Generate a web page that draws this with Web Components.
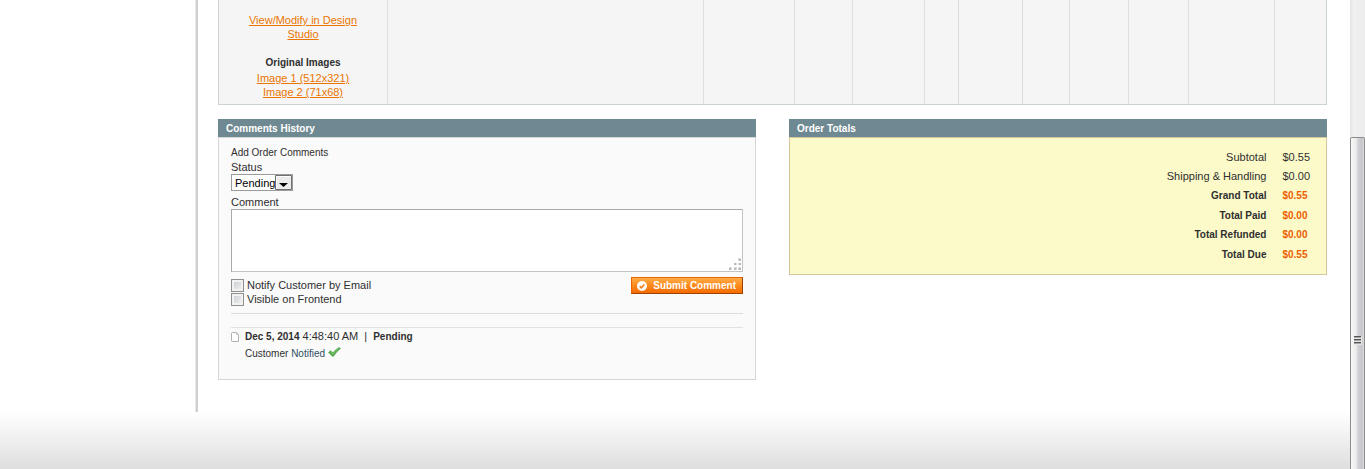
<!DOCTYPE html>
<html lang="en">
<head>
    <meta charset="UTF-8">
    <meta name="viewport" content="width=device-width, initial-scale=1.0">
    <title>Order</title>
    <style>
    body {
        margin: 0;
        overflow: hidden;
        background: #fff;
        color: #2f2f2f;
        font: 11px/14px "Liberation Sans", Arial, sans-serif;
    }
    </style>
</head>
<body>
    <admin-page>
        <order-items></order-items>
        <box-panel heading="Comments History" slot="left">
            <order-comments></order-comments>
        </box-panel>
        <box-panel heading="Order Totals" class="totals" slot="right">
            <order-totals></order-totals>
        </box-panel>
    </admin-page>
    <script>
        function define(name, html, setup) {
            customElements.define(name, class extends HTMLElement {
                constructor() {
                    super();
                    this.attachShadow({ mode: 'open' }).innerHTML = html;
                }
                connectedCallback() {
                    if (setup) setup(this, this.shadowRoot);
                }
            });
        }

        define('scroll-track', `
            <style>
            :host {
                display: flex;
                flex-direction: column;
                flex: 0 0 15px;
                box-sizing: border-box;
                padding-top: 137px;
                background: linear-gradient(90deg, #e6e6e6, #f0f0f0 4px, #ededed);
            }
            .thumb {
                flex: 1;
                border: 1px solid #8c8c8c;
                border-bottom: 0;
                border-radius: 2px 2px 0 0;
                padding: 198px 0 0 3px;
                background: linear-gradient(90deg, #f7f7f7, #ededed 5px, #d2d2d6 7px, #c6c6ca 11px, #dedede);
            }
            svg { display: block; }
            </style>
            <div class="thumb">
                <svg width="8" height="9" viewBox="0 0 8 9" aria-hidden="true">
                    <path d="M0 0h8v9H0z" fill="#e6e6e6"/>
                    <path d="M0 .5h7M0 3.5h7M0 6.5h7" stroke="#555"/>
                    <path d="M0 1.5h7M0 4.5h7M0 7.5h7" stroke="#a4a4a4"/>
                </svg>
            </div>
        `);

        define('admin-page', `
            <style>
            :host {
                display: flex;
                height: 100vh;
                overflow: hidden;
            }
            .page {
                flex: 1;
                min-width: 0;
                display: flex;
                flex-direction: column;
            }
            .middle {
                display: flex;
            }
            aside {
                flex: 0 0 196px;
                border-right: 2px solid #d0d0d0;
                box-shadow: inset -1px 0 #e8e8e8;
            }
            main {
                flex: 1;
                min-width: 0;
                padding: 0 23px 32px 20px;
            }
            .boxes {
                display: grid;
                grid-template-columns: 1fr 1fr;
                align-items: start;
                gap: 33px;
                margin-top: 14px;
            }
            footer {
                flex: 1;
                background: linear-gradient(#fff, #dedede);
            }
            </style>
            <div class="page">
                <div class="middle">
                    <aside></aside>
                    <main>
                        <slot></slot>
                        <div class="boxes">
                            <slot name="left"></slot>
                            <slot name="right"></slot>
                        </div>
                    </main>
                </div>
                <footer></footer>
            </div>
            <scroll-track></scroll-track>
        `);

        define('order-items', `
            <style>
            :host { display: block; }
            table {
                width: 100%;
                table-layout: fixed;
                border-collapse: separate;
                border-spacing: 0;
                border: solid #cbd3d4;
                border-width: 0 1px 1px;
                background: #f5f5f5;
            }
            td {
                padding: 13px 24px 5px;
                border-right: 1px solid #dadfe0;
                vertical-align: top;
                text-align: center;
            }
            td:empty { padding: 0; }
            td:last-child { border-right: 0; }
            p { margin: 0 0 14px; }
            p:last-child { margin: 0; }
            a { color: #ea7601; }
            strong {
                display: block;
                font-size: 10px;
                line-height: 16px;
            }
            </style>
            <table>
                <colgroup></colgroup>
                <tr>
                    <td>
                        <p><a href="#">View/Modify in Design Studio</a></p>
                        <p>
                            <strong>Original Images</strong>
                            <a href="#">Image 1 (512x321)</a><br>
                            <a href="#">Image 2 (71x68)</a>
                        </p>
                    </td>
                </tr>
            </table>
        `, (host, root) => {
            // 0 lets the product column take the remaining width
            const widths = [169, 0, 91, 58, 72, 34, 64, 47, 59, 60, 86, 51];
            const group = root.querySelector('colgroup');
            const row = root.querySelector('tr');
            widths.forEach((width, i) => {
                const col = document.createElement('col');
                if (width) col.style.width = width + 'px';
                group.append(col);
                if (i) row.append(document.createElement('td'));
            });
        });

        define('box-panel', `
            <style>
            :host {
                display: block;
                --line: #d6d6d6;
                --fill: #fafafa;
            }
            :host(.totals) {
                --line: #d7c699;
                --fill: #fcfac9;
            }
            h4 {
                margin: 0;
                padding: 1px 8px 0;
                background: #6f8992;
                color: #fff;
                font-size: 10px;
                line-height: 17px;
            }
            .body {
                border: 1px solid var(--line);
                background: var(--fill);
            }
            </style>
            <h4></h4>
            <div class="body"><slot></slot></div>
        `, (host, root) => {
            root.querySelector('h4').textContent = host.getAttribute('heading');
        });

        define('order-totals', `
            <style>
            :host {
                display: block;
                padding: 9px 8px;
            }
            table {
                width: 100%;
                height: 118px;
                border-collapse: collapse;
            }
            th, td {
                padding: 0 8px;
                text-align: right;
                font-weight: normal;
            }
            td {
                width: 27px;
                text-align: left;
            }
            .sum th, .sum td {
                font-size: 10px;
                font-weight: bold;
            }
            .sum td { color: #eb5e00; }
            </style>
            <table></table>
        `, (host, root) => {
            const rows = [
                ['Subtotal', '$0.55'],
                ['Shipping & Handling', '$0.00'],
                ['Grand Total', '$0.55', true],
                ['Total Paid', '$0.00', true],
                ['Total Refunded', '$0.00', true],
                ['Total Due', '$0.55', true],
            ];
            const table = root.querySelector('table');
            for (const [label, price, sum] of rows) {
                const row = table.insertRow();
                if (sum) row.className = 'sum';
                const th = document.createElement('th');
                th.scope = 'row';
                th.textContent = label;
                row.append(th);
                row.insertCell().textContent = price;
            }
        });

        define('order-comments', `
            <style>
            :host {
                display: block;
                padding: 7px 12px 17px;
            }
            .title { font-size: 10px; line-height: 15px; margin-bottom: 1px; }
            label { display: block; line-height: 13px; }
            .select {
                display: block;
                position: relative;
                width: 62px;
                margin: 0 0 5px;
            }
            select {
                appearance: none;
                display: block;
                box-sizing: border-box;
                width: 100%;
                height: 17px;
                margin: 0;
                padding: 0 0 0 3px;
                border: 1px solid #9a9a9a;
                border-radius: 0;
                background: #fff;
                color: #000;
                font: inherit;
            }
            .select svg {
                position: absolute;
                top: 0;
                right: 0;
                pointer-events: none;
            }
            .area { position: relative; }
            textarea {
                display: block;
                box-sizing: border-box;
                width: 100%;
                height: 63px;
                margin: 0;
                border: 1px solid #c3c3c3;
                border-top-color: #aaa;
                border-left-color: #aaa;
                resize: none;
                font: inherit;
            }
            .area svg {
                position: absolute;
                right: 1px;
                bottom: 1px;
            }
            .actions {
                display: flex;
                justify-content: space-between;
                align-items: flex-start;
                padding: 5px 0 7px;
            }
            .checks label {
                display: flex;
                align-items: center;
                gap: 3px;
                line-height: 14px;
            }
            .checks { padding-top: 1px; }
            input {
                appearance: none;
                box-sizing: border-box;
                width: 13px;
                height: 13px;
                margin: 1px 0 0;
                border: 1px solid #8e8f8f;
                background: linear-gradient(135deg, #c6cad2, #f4f4f4);
                box-shadow: inset 0 0 0 2px #f2f2f2;
            }
            button {
                display: flex;
                align-items: center;
                gap: 6px;
                height: 17px;
                box-sizing: border-box;
                padding: 0 6px 0 5px;
                border: 1px solid #ed6502;
                border-right-color: #a04300;
                border-bottom-color: #a04300;
                background: linear-gradient(#ffac47, #fb8a1c 50%, #f46a00);
                color: #fff;
                font: bold 10px/15px "Liberation Sans", Arial, sans-serif;
            }
            hr {
                margin: 0;
                border: 0;
                border-top: 1px solid #dcdcdc;
            }
            ul {
                list-style: none;
                margin: 13px 0 0;
                padding: 0;
                border-top: 1px solid #e2e2e2;
            }
            li {
                display: grid;
                grid-template-columns: 8px 1fr;
                column-gap: 6px;
                align-items: center;
                line-height: 16px;
            }
            strong, small { font-size: 10px; }
            .sep { margin: 0 3px; }
            small { grid-column: 2; line-height: 17px; }
            small span { color: #2f4f63; }
            </style>
            <div class="title">Add Order Comments</div>
            <label for="status">Status</label>
            <div class="select">
                <select id="status"><option>Pending</option></select>
                <svg width="18" height="17" viewBox="0 0 18 17" aria-hidden="true">
                    <path d="M.5 1.5h16v14H.5z" fill="#ececec" stroke="#707070"/>
                    <path d="M1.5 14.5v-12h14" fill="none" stroke="#fff"/>
                    <path d="M4 9h9L8.5 13z" fill="#000"/>
                </svg>
            </div>
            <label for="comment">Comment</label>
            <div class="area">
                <textarea id="comment"></textarea>
                <svg width="13" height="13" viewBox="0 0 13 13" aria-hidden="true">
                    <path d="M9 0h3v3H9zM5 5h3v2H5zM9 5h3v2H9zM0 9h3v3H0zM5 9h3v3H5zM9 9h3v3H9z" fill="#dcdcdc"/>
                    <path d="M10 1h2v2h-2zM5 5h2v2H5zM10 5h2v2h-2zM0 10h2v2H0zM5 10h2v2H5zM10 10h2v2h-2z" fill="#b8b8b8"/>
                </svg>
            </div>
            <div class="actions">
                <div class="checks">
                    <label><input type="checkbox">Notify Customer by Email</label>
                    <label><input type="checkbox">Visible on Frontend</label>
                </div>
                <button type="button">
                    <svg width="10" height="10" viewBox="0 0 10 10" aria-hidden="true">
                        <circle cx="5" cy="5" r="5" fill="#fff"/>
                        <path d="M2.7 5.2l1.6 1.6 3-3.4" fill="none" stroke="#f47a10" stroke-width="1.5"/>
                    </svg>
                    Submit Comment
                </button>
            </div>
            <hr>
            <ul>
                <li>
                    <svg width="8" height="10" viewBox="0 0 8 10" aria-hidden="true">
                        <path d="M1.5.5h4l2 2v7h-6a1 1 0 0 1-1-1v-7a1 1 0 0 1 1-1z" fill="#fff" stroke="#b0b0b0"/>
                        <path d="M5.5.5v2h2" fill="none" stroke="#c4c4c4"/>
                    </svg>
                    <div><strong>Dec 5, 2014</strong> 4:48:40 AM<span class="sep"> | </span><strong>Pending</strong></div>
                    <small>Customer <span>Notified</span>
                        <svg width="13" height="10" viewBox="0 0 13 10" aria-hidden="true">
                            <path d="M.5 5.5L2.5 3.8 5 5.8Q7.5 2.5 11 .5L12.5 1.5Q8.5 4.5 5.5 9.3H4.5Z" fill="#58ad50" stroke="#4a9a46" stroke-width=".6"/>
                            <path d="M2.5 5L5 7Q7.5 4 10.5 1.8" fill="none" stroke="#7cc570"/>
                        </svg>
                    </small>
                </li>
            </ul>
        `);
    </script>
</body>
</html>
